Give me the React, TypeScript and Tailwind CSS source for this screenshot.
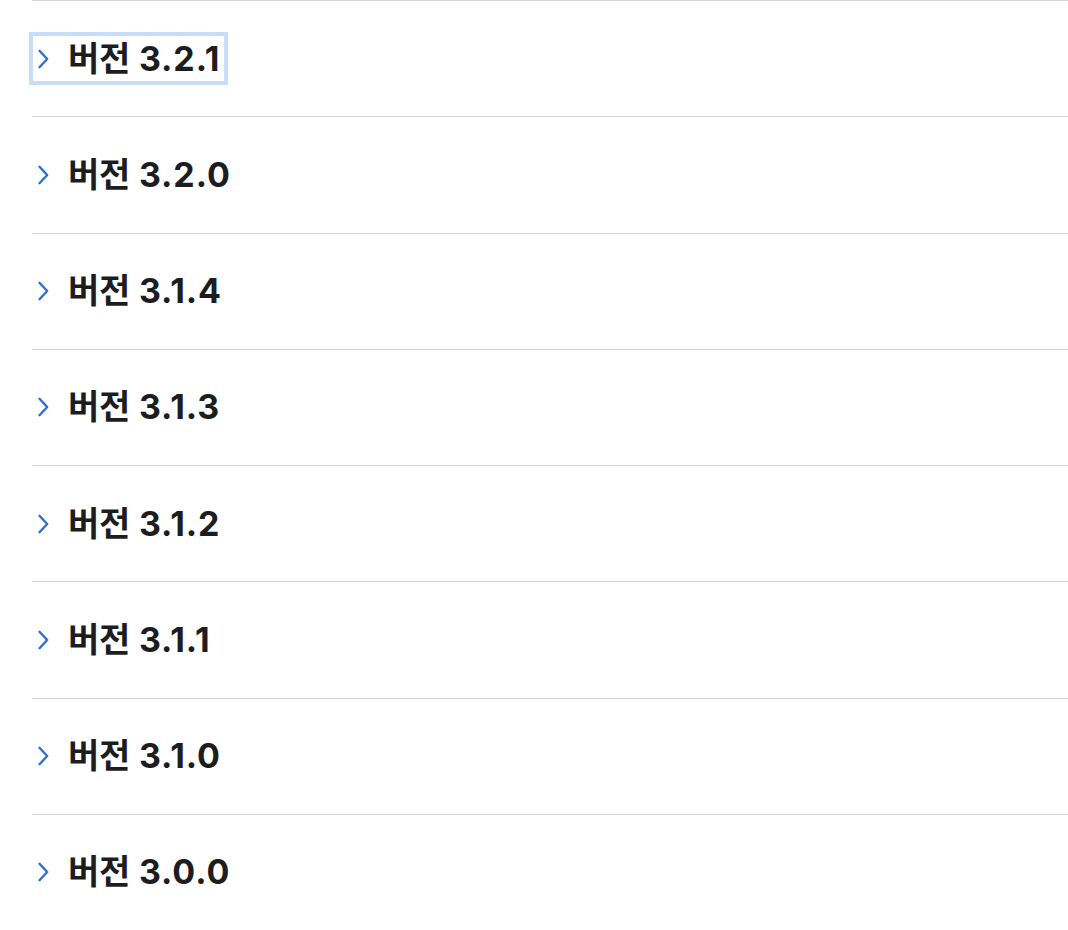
import React from 'react';

const versions = ['3.2.1', '3.2.0', '3.1.4', '3.1.3', '3.1.2', '3.1.1', '3.1.0', '3.0.0'];

const Chevron = () => (
  <svg width="13" height="20" viewBox="0 0 13 20" fill="none" className="shrink-0">
    <path d="M2.5 1.8 L10.2 10 L2.5 18.2" stroke="#2f6fd0" strokeWidth="2.4" strokeLinecap="round" strokeLinejoin="round" />
  </svg>
);

const App: React.FC = () => {
  return (
    <div className="w-[1068px] h-[930px] bg-white pl-[32px] overflow-hidden" style={{ fontFamily: '"Inter", "Noto Sans CJK KR", sans-serif' }}>
      {versions.map((v, i) => (
        <div key={v} className="h-[116.25px] border-t border-[#d6d6d6] flex items-center">
          {/* first item has keyboard focus */}
          <div
            className={
              'inline-flex items-center h-[45px] pl-[4px] pr-[4px] ml-[1px] ' +
              (i === 0 ? 'ring-4 ring-[#c8ddf8]' : '')
            }
          >
            <Chevron />
            <span className="ml-[18px] text-[34px] font-bold text-[#1d1d1f] leading-none whitespace-nowrap">
              <span className="tracking-[-0.3px]">버전</span>
              <span className="ml-[9px] tracking-[0.9px]">{v}</span>
            </span>
          </div>
        </div>
      ))}
    </div>
  );
};

export default App;
